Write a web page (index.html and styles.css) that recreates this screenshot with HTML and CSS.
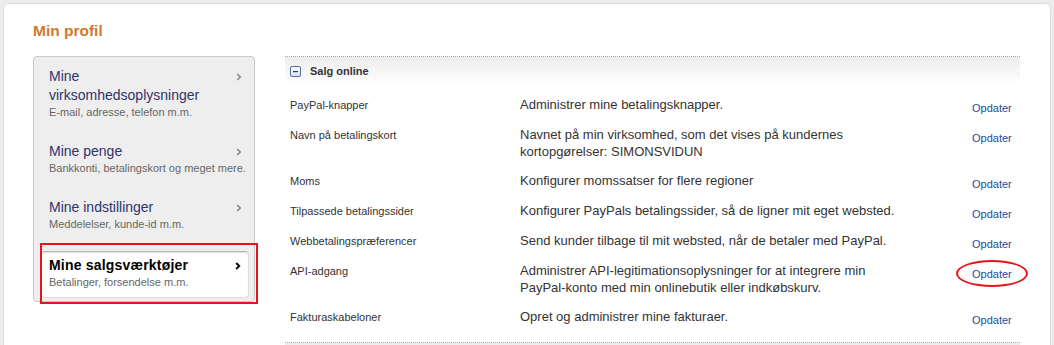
FILE: index.html
```html
<!DOCTYPE html>
<html lang="da">
<head>
    <meta charset="UTF-8">
    <meta name="viewport" content="width=device-width, initial-scale=1.0">
    <title>Min profil</title>
    <link rel="stylesheet" href="styles.css">
</head>
<body>
    <div class="panel">
        <h1 class="page-title">Min profil</h1>

        <div class="profile">
            <!-- Left menu -->
            <ul class="profile-nav">
                <li class="nav-item">
                    <a href="#">
                        <span class="nav-head">
                            <span class="nav-title">Mine virksomhedsoplysninger</span>
                            <svg class="chev" width="6" height="8" viewBox="0 0 6 8"><path d="M1.2 1l3 3-3 3"/></svg>
                        </span>
                        <span class="nav-sub">E-mail, adresse, telefon m.m.</span>
                    </a>
                </li>
                <li class="nav-item">
                    <a href="#">
                        <span class="nav-head">
                            <span class="nav-title">Mine penge</span>
                            <svg class="chev" width="6" height="8" viewBox="0 0 6 8"><path d="M1.2 1l3 3-3 3"/></svg>
                        </span>
                        <span class="nav-sub">Bankkonti, betalingskort og meget mere.</span>
                    </a>
                </li>
                <li class="nav-item">
                    <a href="#">
                        <span class="nav-head">
                            <span class="nav-title">Mine indstillinger</span>
                            <svg class="chev" width="6" height="8" viewBox="0 0 6 8"><path d="M1.2 1l3 3-3 3"/></svg>
                        </span>
                        <span class="nav-sub">Meddelelser, kunde-id m.m.</span>
                    </a>
                </li>
                <li class="nav-item active">
                    <a href="#">
                        <span class="nav-head">
                            <span class="nav-title">Mine salgsværktøjer</span>
                            <svg class="chev" width="6" height="8" viewBox="0 0 6 8"><path d="M1.2 1l3 3-3 3"/></svg>
                        </span>
                        <span class="nav-sub">Betalinger, forsendelse m.m.</span>
                    </a>
                    <span class="mark-box"></span>
                </li>
            </ul>

            <!-- Settings list -->
            <div class="settings">
                <div class="section">
                    <div class="section-head">
                        <svg class="toggle" width="11" height="11" viewBox="0 0 11 11">
                            <defs>
                                <linearGradient id="tg" x1="0" y1="0" x2="0" y2="1">
                                    <stop offset="0" stop-color="#ffffff"/>
                                    <stop offset="1" stop-color="#d9e2ee"/>
                                </linearGradient>
                            </defs>
                            <rect x="0.5" y="0.5" width="10" height="10" rx="1.5" fill="url(#tg)" stroke="#4b72a8"/>
                            <rect x="3" y="5" width="5" height="1.2" fill="#2b3b5c"/>
                        </svg>
                        <span class="section-title">Salg online</span>
                    </div>

                    <div class="rows">
                        <div class="row">
                            <div class="row-label">PayPal-knapper</div>
                            <div class="row-desc">Administrer mine betalingsknapper.</div>
                            <div class="row-action"><a href="#">Opdater</a></div>
                        </div>
                        <div class="row">
                            <div class="row-label">Navn på betalingskort</div>
                            <div class="row-desc">Navnet på min virksomhed, som det vises på kundernes kortopgørelser: SIMONSVIDUN</div>
                            <div class="row-action"><a href="#">Opdater</a></div>
                        </div>
                        <div class="row">
                            <div class="row-label">Moms</div>
                            <div class="row-desc">Konfigurer momssatser for flere regioner</div>
                            <div class="row-action"><a href="#">Opdater</a></div>
                        </div>
                        <div class="row">
                            <div class="row-label">Tilpassede betalingssider</div>
                            <div class="row-desc">Konfigurer PayPals betalingssider, så de ligner mit eget websted.</div>
                            <div class="row-action"><a href="#">Opdater</a></div>
                        </div>
                        <div class="row">
                            <div class="row-label">Webbetalingspræferencer</div>
                            <div class="row-desc">Send kunder tilbage til mit websted, når de betaler med PayPal.</div>
                            <div class="row-action"><a href="#">Opdater</a></div>
                        </div>
                        <div class="row">
                            <div class="row-label">API-adgang</div>
                            <div class="row-desc">Administrer API-legitimationsoplysninger for at integrere min PayPal-konto med min onlinebutik eller indkøbskurv.</div>
                            <div class="row-action"><a href="#" class="marked">Opdater<span class="mark-ring"></span></a></div>
                        </div>
                        <div class="row">
                            <div class="row-label">Fakturaskabeloner</div>
                            <div class="row-desc">Opret og administrer mine fakturaer.</div>
                            <div class="row-action"><a href="#">Opdater</a></div>
                        </div>
                    </div>
                </div>

                <div class="section">
                    <div class="section-head"></div>
                </div>
            </div>
        </div>
    </div>
</body>
</html>
```

FILE: styles.css
```css
* {
    margin: 0;
    padding: 0;
    box-sizing: border-box;
}

body {
    background-color: #ececec;
    padding: 3px 3px 0;
    font-family: 'Liberation Sans', Arial, sans-serif;
    color: #333;
}

a {
    text-decoration: none;
}

.panel {
    background-color: #fff;
    border: 1px solid #dedede;
    border-radius: 6px;
    min-height: 400px;
    padding: 17px 30px 0 29px;
}

.page-title {
    font-size: 15.5px;
    line-height: 20px;
    font-weight: bold;
    color: #d07a2c;
    margin-bottom: 15px;
}

.profile {
    display: flex;
    align-items: flex-start;
    gap: 30px;
}

/* Left menu */
.profile-nav {
    list-style: none;
    width: 222px;
    flex-shrink: 0;
    background-color: #eee;
    border: 1px solid #c9c9c9;
    border-radius: 4px;
    padding-bottom: 3px;
}

.nav-item a {
    display: block;
    padding: 10px 12px 13px 15px;
}

.nav-head {
    display: flex;
    align-items: flex-start;
    justify-content: space-between;
    gap: 10px;
}

.nav-title {
    font-size: 14px;
    line-height: 19px;
    color: #30336b;
}

.nav-sub {
    display: block;
    font-size: 11px;
    line-height: 14px;
    color: #666;
    white-space: nowrap;
}

.chev {
    flex-shrink: 0;
    margin-top: 6px;
}

.chev path {
    fill: none;
    stroke: #8a8a8a;
    stroke-width: 1.7;
}

.nav-item.active {
    position: relative;
    margin: 7px 5px 0 7px;
    background-color: #fff;
    border: 1px solid #ddd;
    border-top-color: #b5b5b5;
    border-radius: 4px;
    box-shadow: inset 0 1px 1px rgba(0, 0, 0, 0.12);
}

.nav-item.active a {
    padding: 4px 7px 8px 7px;
}

.nav-item.active .nav-title {
    font-weight: bold;
    color: #000;
    letter-spacing: 0.2px;
}

.nav-item.active .chev path {
    stroke: #111;
    stroke-width: 2;
}

/* red annotation around the active item */
.mark-box {
    position: absolute;
    top: -9px;
    left: -2px;
    right: -10px;
    bottom: -7px;
    border: 2px solid #e8141c;
    pointer-events: none;
}

/* Settings list */
.settings {
    flex: 1;
}

.section-head {
    display: flex;
    align-items: center;
    gap: 9px;
    height: 29px;
    padding-left: 5px;
    border-top: 1px dotted #a8a8a8;
    background: linear-gradient(#ededed, #fff);
}

.toggle {
    flex-shrink: 0;
    margin-top: 1px;
}

.section-title {
    font-size: 11px;
    font-weight: bold;
    color: #333;
}

.rows {
    padding: 5px 0 10px;
}

.row {
    display: grid;
    grid-template-columns: 230px 452px 1fr;
    padding: 6px 0 6px 5px;
}

.row-label {
    font-size: 11px;
    line-height: 18px;
    color: #333;
}

.row-desc {
    font-size: 13px;
    line-height: 17px;
    color: #333;
    max-width: 378px;
}

.row-action {
    padding-top: 6px;
    font-size: 11px;
    line-height: 12px;
}

.row-action a {
    position: relative;
    display: inline-block;
    color: #1b4c9a;
}

/* red annotation around one link */
.mark-ring {
    position: absolute;
    top: -8px;
    bottom: -7px;
    left: -16px;
    right: -16px;
    border: 2px solid #e8141c;
    border-radius: 50%;
}
```
